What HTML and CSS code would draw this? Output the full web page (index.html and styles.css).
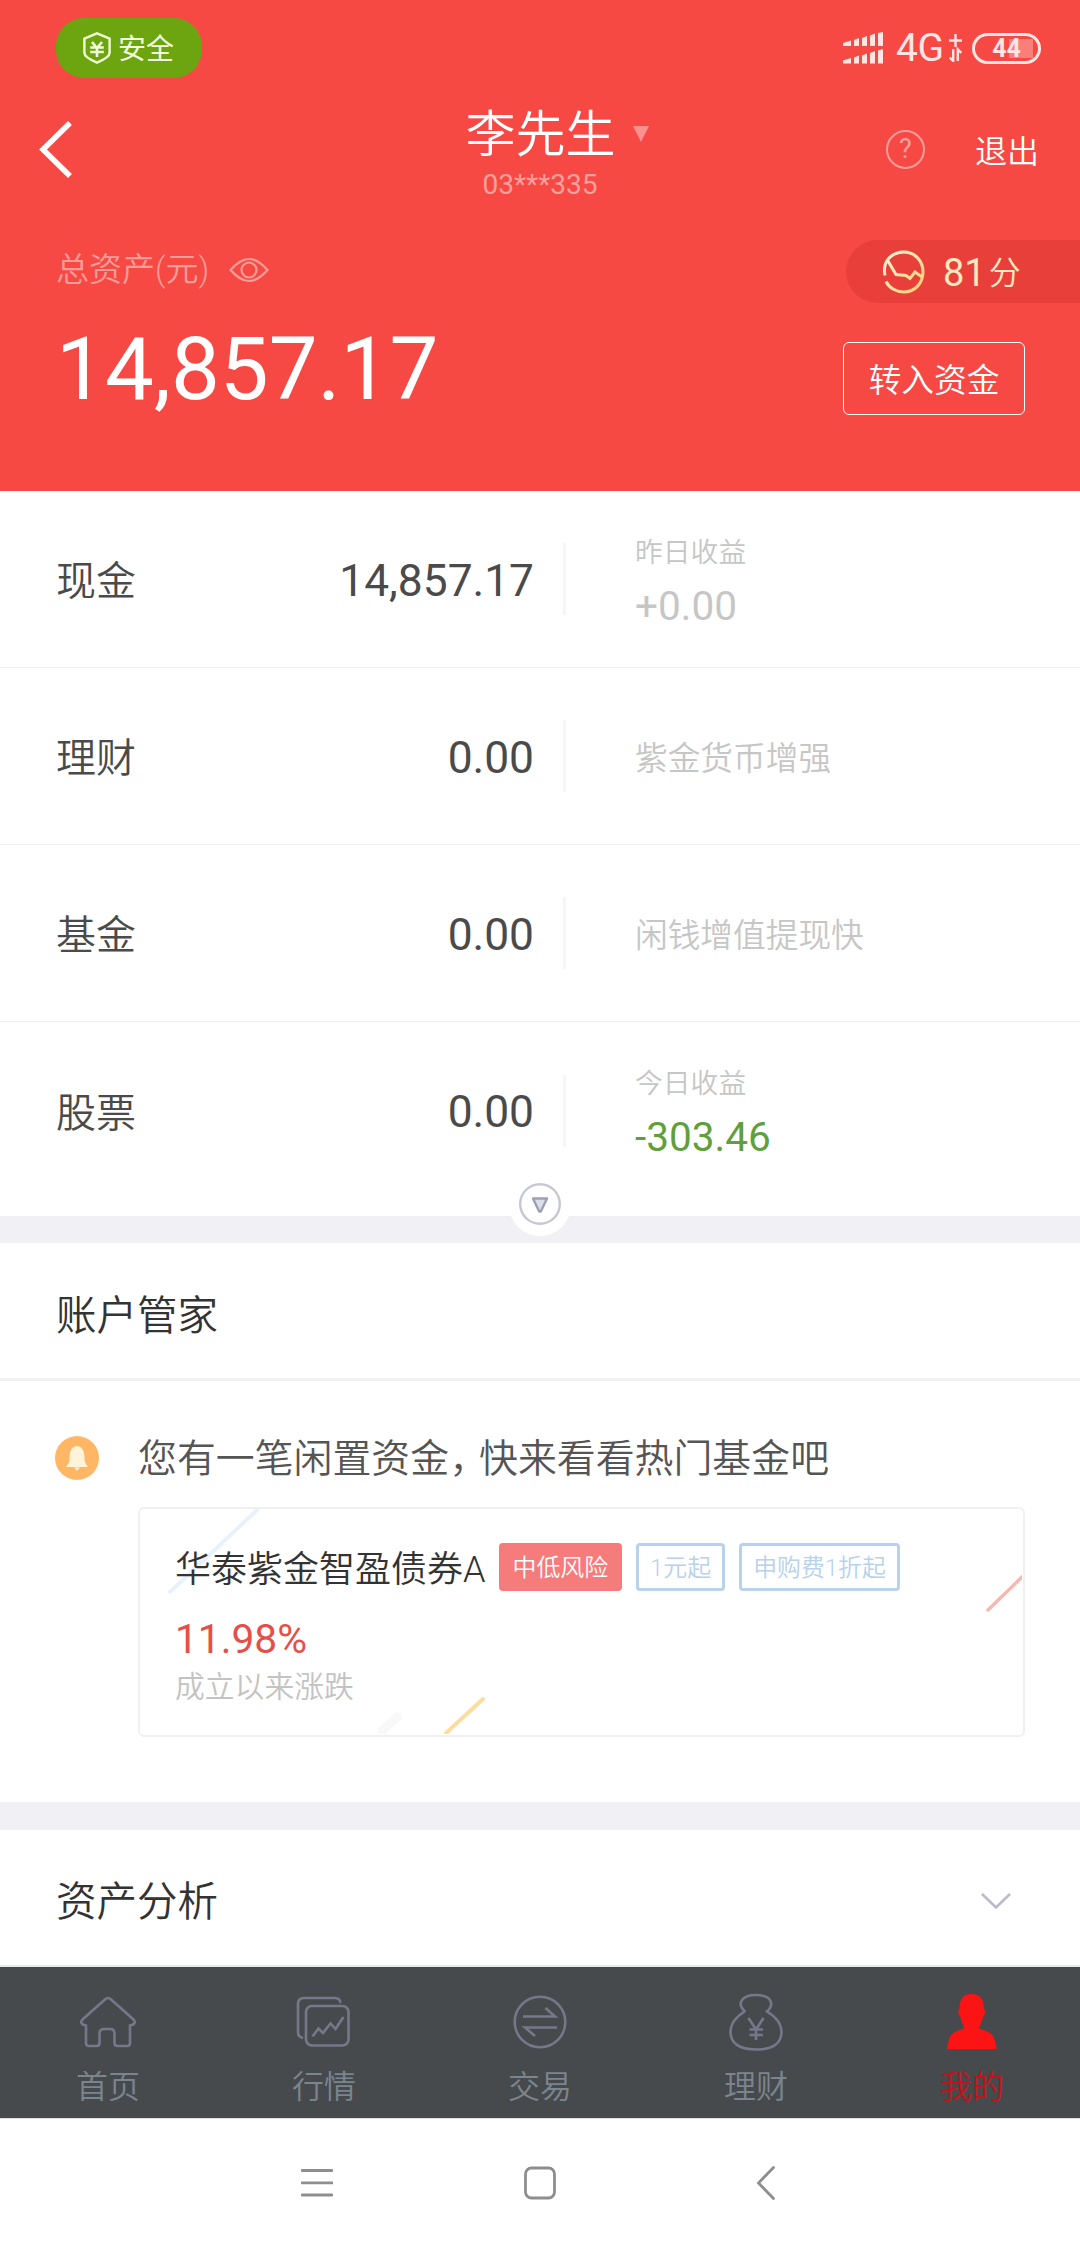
FILE: index.html
```html
<!DOCTYPE html>
<html lang="zh-CN">
<head>
  <meta charset="UTF-8" />
  <meta name="viewport" content="width=device-width, initial-scale=1.0"/>
  <title>我的资产</title>
  <link rel="stylesheet" href="styles.css">
</head>
<body>
  <header class="header">
    <div class="status-bar">
      <div class="safe-badge">
        <svg width="28" height="32" viewBox="0 0 28 32" fill="none" stroke="#f0ffd8" stroke-width="2.4">
          <path d="M14 1.4L26.6 6.600V21C26.600 25 19 28.500 14 30.600C9 28.500 1.400 25 1.400 21V6.600Z"/>
          <path d="M9 10l5 6 5-6M7.200 15.500h13.600M7.200 20h13.600M14 15v10" stroke-width="2.600"/>
        </svg>
        <span>安全</span>
      </div>
      <div class="status-right">
        <svg class="signal" width="40" height="32" viewBox="0 0 40 32" fill="#ffe6e4">
          <path d="M0 11l8-2.500V14H0zM11 8l5-2v8h-5zM19 6l5-2v10h-5zM27 3.500l5-2V14h-5zM35 1l5-1v14h-5z"/>
          <path d="M0 28.500L8 26v5.500H0zM11 25.500l5-2v8h-5zM19 23.500l5-2v10h-5zM27 21l5-2v12.500h-5zM35 18.500l5-1.500v14.500h-5z"/>
        </svg>
        <span class="network">4G</span>
        <svg class="data" width="13" height="28" viewBox="0 0 13 28" fill="none" stroke="#ffe6e4" stroke-width="2.4">
          <path d="M6.500 0v13M0 6.500h13"/>
          <path d="M4.200 15v12L.7 23.500M8.800 27V15.500L12.300 19"/>
        </svg>
        <div class="battery"><span>44</span></div>
      </div>
    </div>

    <div class="navbar">
      <svg class="back" width="40" height="60" viewBox="0 0 40 60" fill="none" stroke="#fff" stroke-width="5.500">
        <path d="M36 4L9 30.500L36 57"/>
      </svg>
      <div class="user">
        <div class="user-name">李先生<i class="caret"></i></div>
        <div class="user-id">03***335</div>
      </div>
      <div class="nav-actions">
        <div class="help">?</div>
        <span class="logout">退出</span>
      </div>
    </div>

    <div class="assets">
      <div class="assets-left">
        <div class="assets-label">
          <span>总资产(元)</span>
          <svg width="40" height="26" viewBox="0 0 40 26" fill="none" stroke="#fa9c98" stroke-width="2.200">
            <path d="M1.500 13C8 6 13 2 20 2S32 6 38.500 13C32 20 27 24 20 24S8 20 1.500 13Z"/>
            <circle cx="20" cy="13" r="7.500"/>
          </svg>
        </div>
        <div class="total">14,857.17</div>
      </div>
      <div class="assets-right">
        <div class="score">
          <svg width="42" height="44" viewBox="0 0 42 44" fill="none" stroke-width="3">
            <defs>
              <linearGradient id="gold" x1="0" y1="0" x2="1" y2="1">
                <stop offset="0" stop-color="#fff3d8"/>
                <stop offset="1" stop-color="#fdd071"/>
              </linearGradient>
            </defs>
            <path stroke="url(#gold)" d="M2 25.500C-1 11 9 2 21 2C32 2 40 11 40 22S32 42 21 42C14 42 6 38 3 31.500M5 11L13 24.500L23 25.500L27 28.500L32 22L39 27"/>
          </svg>
          <span class="score-num">81</span>
          <span class="score-unit">分</span>
        </div>
        <button type="button" class="transfer">转入资金</button>
      </div>
    </div>
  </header>

  <section class="accounts">
    <div class="row">
      <span class="row-name">现金</span>
      <span class="row-value">14,857.17</span>
      <div class="row-info">
        <span class="info-label">昨日收益</span>
        <span class="info-num">+0.00</span>
      </div>
    </div>
    <div class="row">
      <span class="row-name">理财</span>
      <span class="row-value">0.00</span>
      <div class="row-info"><span class="info-text">紫金货币增强</span></div>
    </div>
    <div class="row">
      <span class="row-name">基金</span>
      <span class="row-value">0.00</span>
      <div class="row-info"><span class="info-text">闲钱增值提现快</span></div>
    </div>
    <div class="row">
      <span class="row-name">股票</span>
      <span class="row-value">0.00</span>
      <div class="row-info">
        <span class="info-label">今日收益</span>
        <span class="info-num down">-303.46</span>
      </div>
    </div>
    <div class="expand">
      <svg width="62" height="62" viewBox="0 0 62 62" fill="none">
        <circle cx="31" cy="31" r="31" fill="#fff"/>
        <circle cx="31" cy="30" r="19.800" stroke="#c6c7d3" stroke-width="2.400"/>
        <path d="M24 24.500H38L31.800 37.500H30.200Z" fill="#dddfe8" stroke="#9d9fb3" stroke-width="2.400" stroke-linejoin="round"/>
      </svg>
    </div>
  </section>

  <section class="butler">
    <h2 class="title">账户管家</h2>
    <div class="notice">
      <svg width="44" height="44" viewBox="0 0 44 44">
        <circle cx="22" cy="22" r="22" fill="#ffb766"/>
        <path d="M22 10C15.500 11 14.500 17 14.500 22C14.500 26 13.500 28 11.500 30V31H32.500V30C30.500 28 29.500 26 29.500 22C29.500 17 28.500 11 22 10ZM19 31.500H25L22 34.500Z" fill="#fff3d9"/>
      </svg>
      <p>您有一笔闲置资金<span class="comma">，</span>快来看看热门基金吧</p>
    </div>
    <div class="card">
      <svg class="card-lines" width="882" height="225" viewBox="0 0 882 225" fill="none" stroke-linecap="round">
        <path d="M117 1L30 83" stroke="#e8f2fc" stroke-width="4"/>
        <path d="M242 222L257 208" stroke="#f8f8f9" stroke-width="9"/>
        <path d="M306 224L343 190" stroke="#fcdd9f" stroke-width="4"/>
        <path d="M848 101L884 66" stroke="#f6b9b1" stroke-width="3.500"/>
      </svg>
      <div class="fund">
        <span class="fund-name">华泰紫金智盈债券A</span>
        <span class="tag tag-risk">中低风险</span>
        <span class="tag">1元起</span>
        <span class="tag">申购费1折起</span>
      </div>
      <div class="rate">11.98%</div>
      <div class="rate-label">成立以来涨跌</div>
    </div>
  </section>

  <section class="analysis">
    <h2 class="title">资产分析</h2>
    <svg width="32" height="20" viewBox="0 0 32 20" fill="none" stroke="#b9bacb" stroke-width="2.600">
      <path d="M2 3L16 16.500L30 3"/>
    </svg>
  </section>

  <nav class="tabs">
    <a class="tab">
      <svg width="60" height="60" viewBox="0 0 60 60">
        <path d="M27.500 6L4.500 26.500C2 29 3.500 32 8 32.500V50Q8 53 11 53H18.500Q21.500 53 21.500 50V40.500Q21.500 36 26 36H32Q36.500 36 36.500 40.500V50Q36.500 53 39.500 53H49Q52 53 52 50V32.500C56.500 32 58 29 55.500 26.500L32.500 6Q30 4 27.500 6Z"/>
      </svg>
      <span>首页</span>
    </a>
    <a class="tab">
      <svg width="60" height="60" viewBox="0 0 60 60">
        <rect x="12" y="13" width="42.500" height="39.500" rx="6"/>
        <path d="M46.500 10Q46 5 41 5H10Q4 5 4 11V39Q4 44 9 45"/>
        <path d="M18.500 43.500L24.500 35.500L29 40L36.500 30.500L41.500 36L49.500 24"/>
      </svg>
      <span>行情</span>
    </a>
    <a class="tab">
      <svg width="60" height="60" viewBox="0 0 60 60">
        <circle cx="30" cy="29" r="25.300"/>
        <path d="M13 23.500H45L35.500 15M47 34.500H15L25 43"/>
      </svg>
      <span>交易</span>
    </a>
    <a class="tab">
      <svg width="60" height="60" viewBox="0 0 60 60">
        <path d="M18.500 18C11 11 15 2 30 2S49 11 41 18.500C50 24 55.500 31 55.500 39C55.500 50 47 56.500 30 56.500S4.500 50 4.500 39C4.500 31 10 24 18.500 18.500Z"/>
        <path d="M22.500 25L30 36.500L37.500 25M23.500 36.500H37M23.500 42H37M30 36V47"/>
      </svg>
      <span>理财</span>
    </a>
    <a class="tab active">
      <svg width="60" height="60" viewBox="0 0 60 60">
        <path d="M29.500 1C22 1 17.500 5 17.500 16C15.500 17 16 21 18 22.500C19 28 21 31 22 35.500C15 38 9.500 39.500 7.500 45C6 49 5.500 53 5 56H54.500C54 53 53.500 49 52 45C50 39.500 44 38 37 35.500C38 31 40.500 28 41.500 22.500C43.500 21 44 17 42 16C42 5 37 1 29.500 1Z"/>
      </svg>
      <span>我的</span>
    </a>
  </nav>

  <div class="system-nav">
    <svg width="32" height="34" viewBox="0 0 32 34"><path d="M1 4.500H31M1 16.800H31M1 29H31"/></svg>
    <svg width="32" height="34" viewBox="0 0 32 34"><rect x="1.500" y="2" width="29" height="30" rx="6"/></svg>
    <svg width="32" height="34" viewBox="0 0 32 34"><path d="M26.500 1.500L11.500 17L26.500 32.500"/></svg>
  </div>
</body>
</html>
```
FILE: styles.css
```css
* {
  box-sizing: border-box;
}
body {
  margin: 0;
  width: 1080px;
  height: 2248px;
  overflow: hidden;
  background: #fff;
  font-family: Roboto, "Noto Sans CJK SC", sans-serif;
  color: #4a4a4a;
}
svg {
  display: block;
  flex-shrink: 0;
}
.header {
  height: 491px;
  background: #f64944;
  color: #fff;
}
.status-bar {
  height: 96px;
  padding: 0 39px 0 56px;
  display: flex;
  align-items: center;
  justify-content: space-between;
}
.safe-badge {
  width: 146px;
  height: 60px;
  padding-left: 27px;
  display: flex;
  align-items: center;
  gap: 7px;
  border-radius: 28px;
  background: #6ca50f;
  color: #f3ffe2;
  font-size: 28px;
}
.safe-badge span {
  padding-bottom: 2px;
}
.status-right {
  display: flex;
  align-items: center;
  color: #ffe6e4;
}
.network {
  width: 49px;
  margin-left: 13px;
  font-size: 39px;
  line-height: 40px;
  letter-spacing: -0.500px;
}
.data {
  margin: 0 10px 0 4px;
}
.battery {
  width: 69px;
  height: 31px;
  padding: 3px;
  border: 3px solid #ffe6e4;
  border-radius: 16px;
  background: linear-gradient(#fa7f7b, #fa7f7b) 34px 3px / 24px 19px no-repeat;
  font-size: 25px;
  font-weight: bold;
  line-height: 19px;
  text-align: center;
}
.navbar {
  height: 110px;
  padding: 0 41px 0 34px;
  display: grid;
  grid-template-columns: 200px 1fr 193px;
}
.back {
  margin-top: 23px;
}
.user {
  text-align: center;
}
.user-name {
  display: flex;
  justify-content: center;
  align-items: center;
  padding: 11px 0 0 34px;
  font-size: 50px;
  font-weight: 350;
  line-height: 56px;
}
.caret {
  margin: -2px 0 0 17px;
  border: 8px solid transparent;
  border-top: 16px solid #fb918e;
  border-bottom: 0;
}
.user-id {
  margin-top: 5px;
  color: #fba09d;
  font-size: 28px;
  line-height: 34px;
}
.nav-actions {
  height: 106px;
  display: flex;
  align-items: center;
  justify-content: space-between;
  padding-left: 40px;
}
.help {
  width: 39px;
  height: 39px;
  border: 2px solid #fba09d;
  border-radius: 50%;
  color: #fba09d;
  font-size: 27px;
  line-height: 35px;
  text-align: center;
}
.logout {
  padding-bottom: 1px;
  font-size: 32px;
  font-weight: 350;
}
.assets {
  display: flex;
  justify-content: space-between;
  padding: 34px 0 0 56px;
}
.assets-label {
  display: flex;
  align-items: center;
  gap: 20px;
  height: 60px;
  color: #fa9c98;
  font-size: 33px;
  font-weight: 350;
}
.assets-label span {
  padding-bottom: 7px;
}
.total {
  margin-top: 15px;
  font-size: 87px;
  line-height: 108px;
}
.assets-right {
  display: flex;
  flex-direction: column;
}
.score {
  width: 234px;
  height: 63px;
  margin-left: 3px;
  padding-left: 37px;
  display: flex;
  align-items: center;
  border-radius: 32px 0 0 32px;
  background: #e93f3a;
  color: #ffe9bd;
}
.score-num {
  margin-left: 18px;
  padding-top: 3px;
  font-size: 38px;
}
.score-unit {
  margin-left: 3px;
  padding-bottom: 4px;
  font-size: 32px;
  font-weight: 350;
}
.transfer {
  width: 182px;
  height: 73px;
  margin-top: 39px;
  padding: 0 0 3px;
  border: 1px solid #fff;
  border-radius: 6px;
  background: none;
  color: #fff;
  font-family: inherit;
  font-size: 32.700px;
  font-weight: 350;
}
.accounts {
  position: relative;
  height: 725px;
}
.row {
  height: 177px;
  padding-left: 56px;
  display: grid;
  grid-template-columns: 120px 358px 1fr;
  align-items: center;
  border-bottom: 1px solid #f0f0f0;
}
.row:nth-child(4) {
  border-bottom: none;
}
.row-name {
  padding-bottom: 2px;
  font-size: 40px;
  font-weight: 350;
}
.row-value {
  padding-top: 3px;
  font-size: 44.300px;
  text-align: right;
}
.row-info {
  height: 72px;
  margin-left: 29px;
  padding-left: 69px;
  border-left: 3px solid #f6f6f7;
  display: flex;
  flex-direction: column;
  justify-content: center;
  color: #c6c6c6;
}
.info-label {
  padding-top: 6px;
  font-size: 27.800px;
  font-weight: 350;
  line-height: 40px;
}
.info-num {
  margin-top: 7px;
  font-size: 40.500px;
  line-height: 52px;
}
.down {
  color: #5f9f3c;
}
.info-text {
  padding-bottom: 2px;
  font-size: 32.700px;
  font-weight: 350;
}
/* toggle sits over the edge of the list */
.expand {
  position: absolute;
  left: 509px;
  bottom: -20px;
}
.butler {
  height: 586px;
  border-top: 27px solid #f0f0f5;
}
.title {
  margin: 0;
  color: #333;
  font-size: 40.500px;
  font-weight: 350;
}
.butler .title {
  height: 138px;
  padding: 0 56px;
  line-height: 147px;
  border-bottom: 3px solid #f0f0f2;
}
.notice {
  display: flex;
  align-items: center;
  gap: 39px;
  height: 126px;
  padding: 28px 55px 0;
}
.notice p {
  margin: 0;
  padding-top: 2px;
  color: #555;
  font-size: 38.900px;
  font-weight: 350;
  line-height: 60px;
}
.comma {
  letter-spacing: -9px;
}
.card {
  position: relative;
  height: 230px;
  margin: 0 55px 0 138px;
  padding: 34px 0 0 35px;
  border: 2px solid #f0f0f0;
  border-radius: 6px;
  overflow: hidden;
}
.card-lines {
  position: absolute;
  top: 0;
  left: 0;
}
.fund {
  position: relative;
  display: flex;
  align-items: center;
  height: 48px;
  gap: 14px;
}
.fund-name {
  margin-right: -1px;
  padding-top: 5px;
  color: #333;
  font-size: 36px;
  font-weight: 350;
  line-height: 48px;
}
.tag {
  height: 48px;
  padding: 0 11px;
  border: 3px solid #b8d1ed;
  border-radius: 4px;
  color: #b8d1ed;
  font-size: 23.900px;
  font-weight: 350;
  line-height: 45px;
}
.tag-risk {
  border-color: #f67b7b;
  background: #f67b7b;
  color: #fff;
}
.rate {
  margin-top: 22px;
  color: #e64f49;
  font-size: 40.700px;
  line-height: 52px;
}
.rate-label {
  margin-top: 2px;
  color: #c3c3c3;
  font-size: 29.800px;
  font-weight: 350;
  line-height: 40px;
}
.analysis {
  height: 165px;
  padding: 7px 68px 0 56px;
  display: flex;
  align-items: center;
  justify-content: space-between;
  border-top: 28px solid #f0f0f5;
  border-bottom: 2px solid #e8ecf0;
}
.analysis .title {
  padding-top: 2px;
  line-height: 60px;
}
.tabs {
  display: grid;
  grid-template-columns: repeat(5, 1fr);
  height: 152px;
  border-bottom: 1px solid #dfe3e8;
  background: #474a4d;
}
.tab {
  display: flex;
  flex-direction: column;
  align-items: center;
  padding-top: 26px;
  color: #7b858e;
  font-size: 32px;
  font-weight: 350;
  line-height: 44px;
}
.tab svg {
  margin-bottom: 12px;
  fill: none;
  stroke: #77778a;
  stroke-width: 2.600;
}
.tab.active {
  color: #c41318;
}
.tab.active svg {
  fill: #fa1414;
  stroke: none;
}
.system-nav {
  display: flex;
  justify-content: center;
  gap: 191px;
  height: 129px;
  padding-top: 47px;
}
.system-nav svg {
  fill: none;
  stroke: #8e8e8e;
  stroke-width: 2.800;
  stroke-linecap: round;
}
```
